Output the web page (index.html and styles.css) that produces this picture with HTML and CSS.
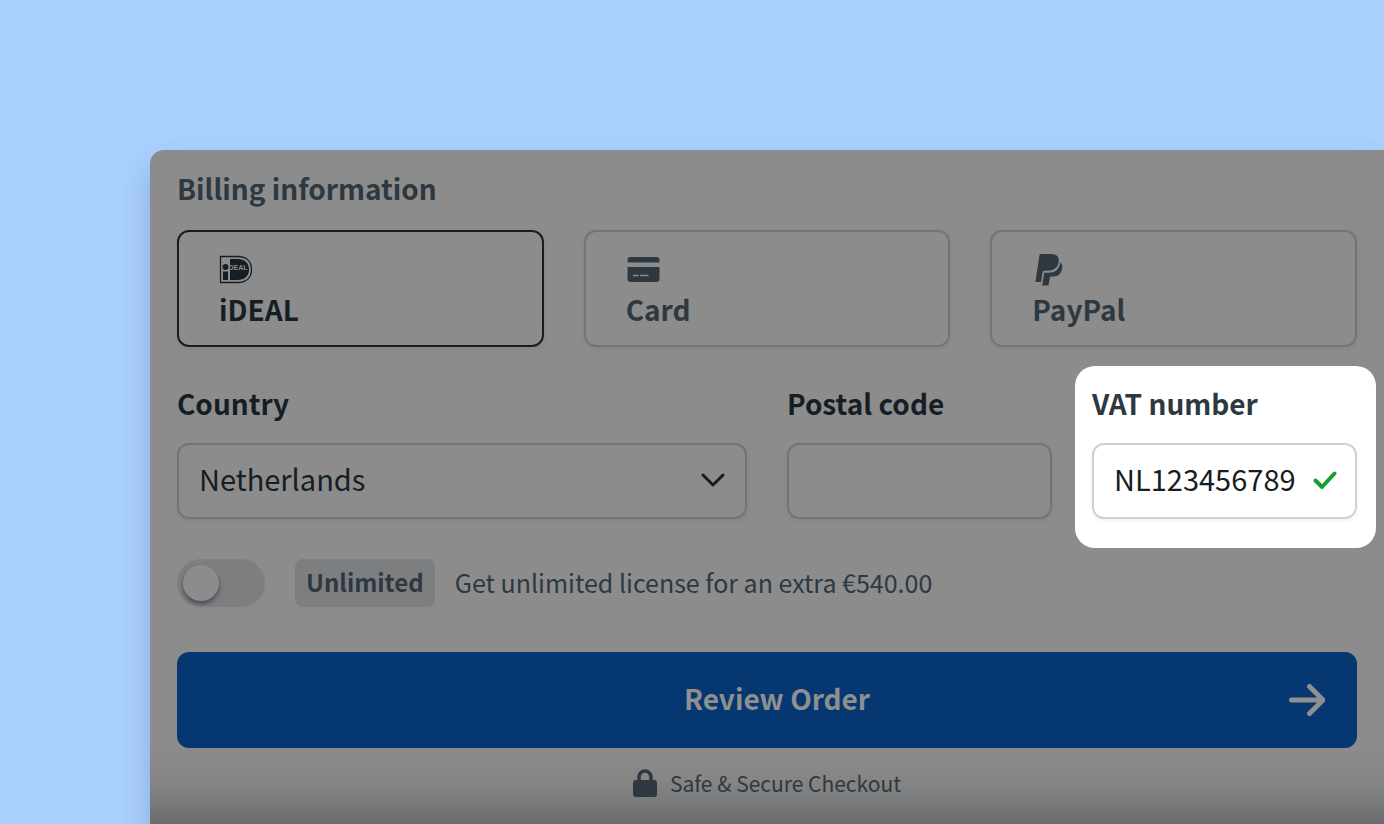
FILE: index.html
```
<!DOCTYPE html>
<html lang="en">
<head>
<meta charset="utf-8">
<meta name="viewport" content="width=device-width, initial-scale=1">
<title>Checkout</title>
<link rel="stylesheet" href="styles.css">
</head>
<body>
<main class="checkout">
  <form class="billing">
    <h2 class="title">Billing information</h2>
    <div class="methods">
      <button type="button" class="method method-selected" aria-pressed="true">
        <svg class="method-icon" viewBox="0 0 34 32" aria-hidden="true">
          <path d="M1.500 2.500h17c9 0 14 5 14 13s-5 13-14 13h-17z" fill="none" stroke="currentColor" stroke-width="1.300"/>
          <circle cx="6.500" cy="13" r="3" fill="currentColor"/>
          <path d="M4 17.500h5v8.500H4zM11 5h7.500c7 0 11.500 4 11.500 10.500S25.500 26 18.500 26H11z" fill="currentColor"/>
          <text class="ideal-mark" x="9.500" y="15.500">DEAL</text>
        </svg>
        <span>iDEAL</span>
      </button>
      <button type="button" class="method" aria-pressed="false">
        <svg class="method-icon" viewBox="0 0 34 32" aria-hidden="true">
          <path d="M1.500 8.500V6a3 3 0 0 1 3-3h26a3 3 0 0 1 3 3v2.500zM1.500 13h32v12a3 3 0 0 1-3 3h-26a3 3 0 0 1-3-3z" fill="currentColor"/>
          <path d="M7 21.500h5.500M14 21.500h8.500" stroke="#8c8c8c" stroke-width="1.500"/>
        </svg>
        <span>Card</span>
      </button>
      <button type="button" class="method" aria-pressed="false">
        <svg class="method-icon" viewBox="0 0 34 32" aria-hidden="true">
          <path d="M7.700 0H19.500C24.500 0 27.500 3 26.700 7.800C25.800 14 21.500 16.800 15.500 16.800H12.500Q10.800 16.800 10.400 18.700L9 28H3.400z" fill="currentColor"/>
          <path d="M28.300 8.300C30.400 10 30.700 12.500 30 15.200C28.700 20.500 25.500 22.500 20.200 22.500H19Q18 22.500 17.800 23.700L16.500 31.500H10.200L12.200 18.700H16.500C23.500 18.700 27.500 15.200 28.300 8.300z" fill="currentColor"/>
        </svg>
        <span>PayPal</span>
      </button>
    </div>

    <div class="fields">
      <div class="field">
        <label class="label" for="country">Country</label>
        <div class="control">
          <select class="input" id="country"><option>Netherlands</option></select>
          <svg class="control-icon" viewBox="0 0 24 24" aria-hidden="true"><path d="M2 7l10 10L22 7" fill="none" stroke="currentColor" stroke-width="3" stroke-linecap="round" stroke-linejoin="round"/></svg>
        </div>
      </div>
      <div class="field">
        <label class="label" for="postal">Postal code</label>
        <div class="control"><input class="input" id="postal" type="text"></div>
      </div>
      <div class="field field-spotlight">
        <label class="label" for="vat">VAT number</label>
        <div class="control">
          <input class="input" id="vat" type="text" value="NL123456789">
          <svg class="control-icon control-valid" viewBox="0 0 24 24" aria-hidden="true"><path d="M2.500 12.500L9 19L21.500 5.500" fill="none" stroke="currentColor" stroke-width="4" stroke-linecap="round" stroke-linejoin="round"/></svg>
        </div>
      </div>
    </div>

    <div class="upgrade">
      <input class="toggle" id="unlimited" type="checkbox" role="switch">
      <label class="upgrade-label" for="unlimited"><span class="badge">Unlimited</span><span class="upgrade-text">Get unlimited license for an extra €540.00</span></label>
    </div>

    <button type="submit" class="submit">Review Order
      <svg class="submit-icon" viewBox="0 0 36 36" aria-hidden="true"><path d="M2.500 18H32M20.500 4.500L34 18L20.500 31.500" fill="none" stroke="currentColor" stroke-width="5" stroke-linecap="round" stroke-linejoin="round"/></svg>
    </button>
  </form>
  <footer class="secure">
    <svg class="lock" viewBox="0 0 24 28" aria-hidden="true"><rect x="0" y="11" width="24" height="17" rx="3" fill="currentColor"/><path d="M6 12V8a6 6 0 0 1 12 0v4" fill="none" stroke="currentColor" stroke-width="3.500"/></svg>
    <span>Safe &amp; Secure Checkout</span>
  </footer>
</main>
</body>
</html>
```
FILE: styles.css
```
:root {
  --surface: #8c8c8c;
  --ink: #151e25;
  --muted: #2e3840;
  --line: #737479;
}

* { box-sizing: border-box; }

body {
  margin: 0;
  min-height: 100vh;
  padding: 150px 0 0 150px;
  display: flex;
  background: #abd1ff;
  color: var(--ink);
  font-family: "Noto Sans CJK SC", "Open Sans", sans-serif;
  font-size: 28px;
  line-height: 40px;
  overflow: hidden;
}

button, input, select { font: inherit; color: inherit; }

.checkout {
  flex: 1;
  display: flex;
  flex-direction: column;
  border-radius: 14px 0 0 0;
  background: linear-gradient(to top, #6b6a6e 0, #7b7c7e 24px, #858585 44px, var(--surface) 80px);
  box-shadow: 0 16px 32px rgba(40, 60, 100, 0.25);
}

.billing {
  display: flex;
  flex-direction: column;
  padding: 20px 27px 0;
}

.title {
  margin: 0 0 24px;
  color: var(--muted);
  font-size: 28px;
  font-weight: 600;
  line-height: 36px;
}

.methods {
  display: grid;
  grid-template-columns: repeat(3, 1fr);
  gap: 40px;
  margin-bottom: 38px;
}

.method {
  display: flex;
  flex-direction: column;
  align-items: flex-start;
  gap: 3px;
  padding: 22px 40px 16px;
  border: 2px solid var(--line);
  border-radius: 12px;
  background: transparent;
  color: var(--muted);
  font-weight: 600;
  text-align: left;
  box-shadow: 0 2px 4px rgba(0, 0, 0, 0.06);
}

.method-selected { border-color: var(--ink); color: var(--ink); }
.method-icon { width: 34px; height: 32px; }

.ideal-mark {
  fill: var(--surface);
  font: 800 7px "Liberation Sans", sans-serif;
}

.fields {
  display: grid;
  grid-template-columns: 570fr 265fr 265fr;
  gap: 40px;
  margin-bottom: 40px;
}

.field {
  position: relative;
  display: flex;
  flex-direction: column;
  gap: 22px;
  min-width: 0;
}

.label { font-weight: 600; line-height: 36px; }
.control { position: relative; display: flex; }

.input {
  width: 100%;
  height: 76px;
  padding: 0 20px 6px;
  border: 2px solid var(--line);
  border-radius: 12px;
  background: transparent;
  font-size: 29px;
  appearance: none;
  outline: 0;
  box-shadow: 0 2px 4px rgba(0, 0, 0, 0.06);
}

.control-icon {
  position: absolute;
  top: 25px;
  right: 22px;
  width: 24px;
  height: 24px;
  pointer-events: none;
}

.control-valid { right: 20px; color: #1b9e2e; }

/* White panel that lifts the field out of the dimmed form */
.field-spotlight { z-index: 0; }
.field-spotlight::before {
  content: "";
  position: absolute;
  z-index: -1;
  inset: -19px -19px -29px -17px;
  border-radius: 20px;
  background: #fff;
}
.field-spotlight .label { color: #2e3840; }
.field-spotlight .input { border-color: #cdd0d6; }

.upgrade {
  display: flex;
  align-items: center;
  gap: 30px;
  margin-bottom: 45px;
}

.toggle {
  flex: none;
  width: 88px;
  height: 48px;
  margin: 0;
  padding: 6px;
  border-radius: 24px;
  background: #7d7e80;
  appearance: none;
}

.toggle::before {
  content: "";
  display: block;
  width: 36px;
  height: 36px;
  border-radius: 50%;
  background: var(--surface);
  box-shadow: 0 3px 4px rgba(40, 44, 60, 0.6);
}

.toggle:checked::before { margin-left: auto; }

.upgrade-label {
  display: flex;
  align-items: center;
  gap: 20px;
  color: var(--muted);
  line-height: 38px;
}

.upgrade-text {
  padding-bottom: 3px;
  font-size: 25px;
}

.badge {
  padding: 4px 11px 6px;
  border-radius: 8px;
  background: #7d7e80;
  font-size: 24px;
  font-weight: 600;
}

.submit {
  position: relative;
  height: 96px;
  padding: 0 0 4px 20px;
  border: 0;
  border-radius: 12px;
  background: #053871;
  color: #8f8f8f;
  font-weight: 600;
}

.submit-icon {
  position: absolute;
  top: 30px;
  right: 32px;
  width: 36px;
  height: 36px;
}

.secure {
  display: flex;
  align-items: center;
  justify-content: center;
  gap: 13px;
  padding-top: 16px;
  color: var(--muted);
  font-size: 21px;
  line-height: 38px;
}

.lock { width: 24px; height: 28px; }
```
